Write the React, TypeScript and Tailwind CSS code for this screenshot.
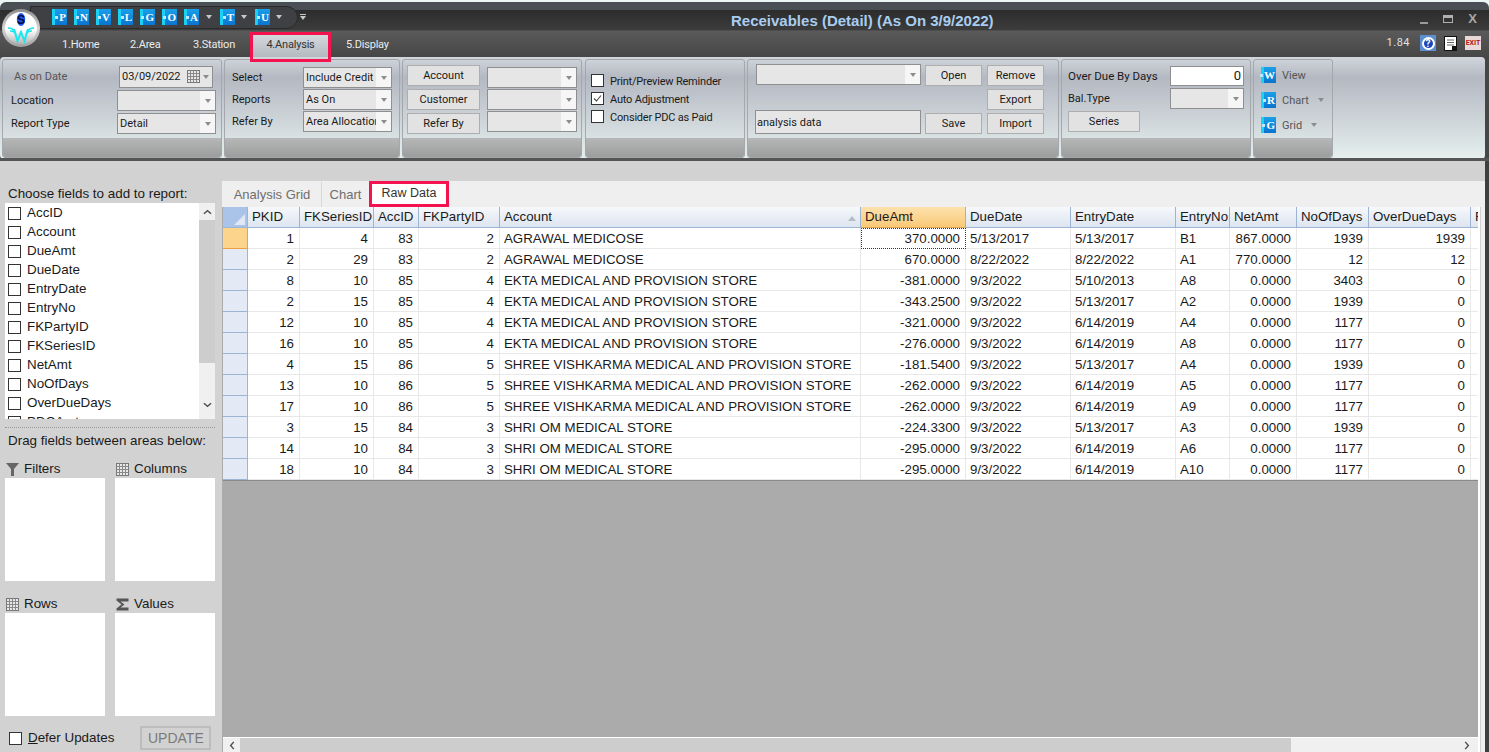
import React from "react";

const rows = [
  ["1", "4", "83", "2", "AGRAWAL MEDICOSE", "370.0000", "5/13/2017", "5/13/2017", "B1", "867.0000", "1939", "1939"],
  ["2", "29", "83", "2", "AGRAWAL MEDICOSE", "670.0000", "8/22/2022", "8/22/2022", "A1", "770.0000", "12", "12"],
  ["8", "10", "85", "4", "EKTA MEDICAL AND PROVISION STORE", "-381.0000", "9/3/2022", "5/10/2013", "A8", "0.0000", "3403", "0"],
  ["2", "15", "85", "4", "EKTA MEDICAL AND PROVISION STORE", "-343.2500", "9/3/2022", "5/13/2017", "A2", "0.0000", "1939", "0"],
  ["12", "10", "85", "4", "EKTA MEDICAL AND PROVISION STORE", "-321.0000", "9/3/2022", "6/14/2019", "A4", "0.0000", "1177", "0"],
  ["16", "10", "85", "4", "EKTA MEDICAL AND PROVISION STORE", "-276.0000", "9/3/2022", "6/14/2019", "A8", "0.0000", "1177", "0"],
  ["4", "15", "86", "5", "SHREE VISHKARMA MEDICAL AND PROVISION STORE", "-181.5400", "9/3/2022", "5/13/2017", "A4", "0.0000", "1939", "0"],
  ["13", "10", "86", "5", "SHREE VISHKARMA MEDICAL AND PROVISION STORE", "-262.0000", "9/3/2022", "6/14/2019", "A5", "0.0000", "1177", "0"],
  ["17", "10", "86", "5", "SHREE VISHKARMA MEDICAL AND PROVISION STORE", "-262.0000", "9/3/2022", "6/14/2019", "A9", "0.0000", "1177", "0"],
  ["3", "15", "84", "3", "SHRI OM MEDICAL STORE", "-224.3300", "9/3/2022", "5/13/2017", "A3", "0.0000", "1939", "0"],
  ["14", "10", "84", "3", "SHRI OM MEDICAL STORE", "-295.0000", "9/3/2022", "6/14/2019", "A6", "0.0000", "1177", "0"],
  ["18", "10", "84", "3", "SHRI OM MEDICAL STORE", "-295.0000", "9/3/2022", "6/14/2019", "A10", "0.0000", "1177", "0"],
];

const columns = ["PKID", "FKSeriesID", "AccID", "FKPartyID", "Account", "DueAmt", "DueDate", "EntryDate", "EntryNo", "NetAmt", "NoOfDays", "OverDueDays"];
const leftAligned = [4, 6, 7, 8];
const gridCols = "grid grid-cols-[25px_52px_74px_45px_81px_361px_105px_105px_105px_54px_67px_72px_102px_7px]";

const fields = ["AccID", "Account", "DueAmt", "DueDate", "EntryDate", "EntryNo", "FKPartyID", "FKSeriesID", "NetAmt", "NoOfDays", "OverDueDays", "PDCAmt"];

function Tile({ letter }: { letter: string }) {
  return (
    <span className="flex h-[16px] w-[15px] shrink-0 items-center justify-end border-l-[3px] border-[#19d0f5] bg-gradient-to-b from-[#1aa0ea] to-[#0b74cf] pr-[1px] [font-family:'Liberation_Serif',serif] text-[11px] font-bold leading-none text-white">
      <span className="mr-[1px] h-[3px] w-[3px] shrink-0 bg-[#bfe8ff]" />
      {letter}
    </span>
  );
}

function Caret({ className = "" }: { className?: string }) {
  return <span className={`h-0 w-0 border-x-[3.5px] border-t-[4px] border-x-transparent border-t-[#8c8c8c] ${className}`} />;
}

function Combo({ value = "", width }: { value?: string; width: string }) {
  return (
    <div className={`flex h-[21px] ${width} items-center border border-[#8f8f8f] bg-[#e6e6e6] pl-[2px] text-[#1a1a1a]`}>
      <span className="min-w-0 flex-1 overflow-hidden whitespace-nowrap pt-[1px]">{value}</span>
      <span className="flex h-full w-[15px] shrink-0 items-center justify-center bg-[#f6f6f6]">
        <Caret />
      </span>
    </div>
  );
}

function Btn({ label, width }: { label: string; width: string }) {
  return (
    <div className={`flex h-[21px] ${width} items-center justify-center border border-[#aeaeae] bg-[#e2e2e2] pt-[2px] text-[#1a1a1a]`}>
      {label}
    </div>
  );
}

function Group({ width, children, className = "" }: { width: string; children: React.ReactNode; className?: string }) {
  return (
    <div className={`flex h-[99px] ${width} shrink-0 flex-col overflow-hidden rounded-[3px] border border-[#a4a8ac] ${className}`}>
      <div className="min-h-0 flex-1">{children}</div>
      <div className="h-[19px] shrink-0 bg-gradient-to-b from-[#b6b8b8] to-[#9c9e9e]" />
    </div>
  );
}

function Check({ checked = false }: { checked?: boolean }) {
  return (
    <span className="flex h-[13px] w-[13px] shrink-0 items-center justify-center border border-[#333] bg-white">
      {checked && (
        <svg viewBox="0 0 11 11" className="h-[11px] w-[11px]">
          <path d="M2 5.5 4.5 8 9 2.5" fill="none" stroke="#444" strokeWidth="1.1" />
        </svg>
      )}
    </span>
  );
}

function Logo() {
  return (
    <div className="absolute left-[2px] top-[9px] flex h-[38px] w-[38px] items-center justify-center rounded-full bg-gradient-to-b from-[#8c8c8c] via-[#d8d8d8] to-[#a0a0a0]">
      <svg viewBox="0 0 32 32" className="h-[32px] w-[32px]">
        <defs>
          <linearGradient id="lg" x1="0" y1="0" x2="0" y2="1">
            <stop offset="0" stopColor="#ffffff" />
            <stop offset="0.55" stopColor="#ffffff" />
            <stop offset="1" stopColor="#b5b5b5" />
          </linearGradient>
        </defs>
        <circle cx="16" cy="16" r="16" fill="url(#lg)" />
        <ellipse cx="16" cy="7.5" rx="4.2" ry="6.5" fill="#1c55ea" />
        <text x="16" y="11.8" textAnchor="middle" fontSize="12" fontWeight="700" fill="#000a40" fontFamily="Liberation Sans, sans-serif">S</text>
        <path d="M3 16c4 0 6 2 7 4M29 16c-4 0-6 2-7 4M5 19c3 0 5 1 6 3M27 19c-3 0-5 1-6 3" fill="none" stroke="#19e6ee" strokeWidth="1.4" />
        <path d="M9 17 12.5 29 16 20 19.5 29 23 17" fill="none" stroke="#19e6ee" strokeWidth="2" />
      </svg>
    </div>
  );
}

function GridIcon() {
  return (
    <svg viewBox="0 0 13 13" className="h-[13px] w-[13px] shrink-0">
      <rect x="0.5" y="0.5" width="12" height="12" fill="#e8e8e8" stroke="#777" />
      <path d="M0.5 3.5h12M0.5 6.5h12M0.5 9.5h12M3.5 0.5v12M6.5 0.5v12M9.5 0.5v12" stroke="#888" strokeWidth="1" />
    </svg>
  );
}

function DropBox({ icon, label }: { icon: React.ReactNode; label: string }) {
  return (
    <div className="flex w-[100px] flex-col">
      <div className="flex h-[20px] items-center gap-[5px] pl-[1px] pt-[2px]">
        {icon}
        {label}
      </div>
      <div className="h-[103px] bg-white" />
    </div>
  );
}

export default function App() {
  return (
    <div className="relative flex h-[752px] w-[1489px] flex-col overflow-hidden bg-[#e9f6f3] pt-[2px] [font-family:'Liberation_Sans',sans-serif]">
      {/* title bar */}
      <div className="h-[8px] shrink-0 rounded-t-[6px] bg-[#4a4e55]" />
      <div className="relative flex h-[21px] shrink-0 items-start border-b border-[#4e4e4e] bg-gradient-to-b from-[#2c2c2c] to-[#3c3c3c]">
        <div className="absolute left-[30px] top-[-4px] h-[23px] w-[268px] rounded-r-[12px] border border-[#2a2a2a] bg-[#3e4044]" />
        <div className="relative -mt-[1px] ml-[52px] flex items-center">
          {["P", "N", "V", "L", "G", "O", "A"].map((l) => (
            <span key={l} className="mr-[7px]">
              <Tile letter={l} />
            </span>
          ))}
          <Caret className="border-t-[#c8c8c8]" />
          <span className="ml-[8px]"><Tile letter="T" /></span>
          <Caret className="ml-[6px] border-t-[#c8c8c8]" />
          <span className="ml-[8px]"><Tile letter="U" /></span>
          <Caret className="ml-[6px] border-t-[#c8c8c8]" />
          <span className="ml-[18px] flex flex-col items-center gap-[1px]">
            <span className="h-px w-[6px] bg-[#c8c8c8]" />
            <Caret className="border-t-[#c8c8c8]" />
          </span>
        </div>
        <div className="absolute left-[731px] top-[2px] whitespace-nowrap text-[15px] font-bold leading-[18px] text-[#a9cdf0]">
          Receivables (Detail) (As On 3/9/2022)
        </div>
        <div className="absolute right-[12px] top-[3px] flex items-center gap-[15px]">
          <span className="mt-[8px] h-[2px] w-[8px] bg-[#9a9a9a]" />
          <span className="h-[8px] w-[10px] border border-t-[3px] border-[#b0b0b0]" />
          <span className="text-[13px] font-bold leading-[12px] text-[#a8a8a8]">X</span>
        </div>
      </div>

      {/* tab row */}
      <div className="relative flex h-[26px] shrink-0 items-center bg-gradient-to-b from-[#5a5a5a] to-[#464646] [font-family:Roboto,sans-serif] text-[11px] tracking-[-0.2px] text-[#ececec]">
        <span className="ml-[62px] w-[68px] pt-[3px]">1.Home</span>
        <span className="w-[63px] pt-[3px]">2.Area</span>
        <span className="w-[60px] pt-[3px]">3.Station</span>
        <span className="flex h-[24px] w-[75px] items-center justify-center self-end bg-gradient-to-b from-[#d8dde2] to-[#b4b8c0] pt-[1px] text-[#333]">4.Analysis</span>
        <span className="ml-[18px] pt-[3px]">5.Display</span>
        <div className="absolute right-[8px] top-[4px] flex items-center tracking-normal">
          <span className="mr-[10px] text-[11px] tracking-[0.5px] text-[#e0e0e0]">1.84</span>
          <span className="flex h-[16px] w-[16px] items-center justify-center bg-[#5b8fd0]">
            <span className="flex h-[13px] w-[13px] items-center justify-center rounded-full border-2 border-white bg-[#1846b8] text-[10px] font-bold text-white">?</span>
          </span>
          <svg viewBox="0 0 14 15" className="ml-[8px] h-[15px] w-[14px]">
            <rect x="0.5" y="0.5" width="12" height="14" fill="#fff" stroke="#111" />
            <path d="M3 4h7M3 6.5h7M3 9h7" stroke="#666" />
            <rect x="8" y="10" width="5" height="5" fill="#111" />
          </svg>
          <span className="ml-[7px] flex h-[14px] w-[16px] items-center justify-center bg-[#e8d8d8] text-[7px] font-bold text-[#b01818]">EXIT</span>
        </div>
      </div>

      {/* ribbon */}
      <div className="relative h-[102px] shrink-0 bg-[#464646] pr-[4px]">
        <div className="flex h-[102px] gap-[2px] rounded-[4px] bg-gradient-to-b from-[#d2d6dc] via-[#b4b8c2] via-[20%] to-[#e6f0ee] pl-[2px] pt-[2px] [font-family:Roboto,sans-serif] text-[11px] text-[#1a1a1a]">
          <Group width="w-[220px]">
            <div className="flex flex-col gap-[2px] pl-[8px] pt-[5px]">
              <div className="flex h-[23px] items-center">
                <span className="ml-[3px] w-[105px] pt-[2px] text-[#555]">As on Date</span>
                <div className="flex h-[22px] w-[94px] items-center border border-[#8f8f8f] bg-[#e6e6e6] pl-[2px]">
                  <span className="flex-1 pt-[1px]">03/09/2022</span>
                  <GridIcon />
                  <Caret className="mx-[3px]" />
                </div>
              </div>
              <div className="flex h-[21px] items-center">
                <span className="w-[106px] pt-[2px]">Location</span>
                <Combo width="w-[99px]" />
              </div>
              <div className="flex h-[21px] items-center">
                <span className="w-[106px] pt-[2px]">Report Type</span>
                <Combo value="Detail" width="w-[99px]" />
              </div>
            </div>
          </Group>
          <Group width="w-[176px]">
            <div className="flex flex-col gap-px pl-[7px] pt-[7px]">
              {[["Select", "Include Credit I"], ["Reports", "As On"], ["Refer By", "Area Allocation"]].map(([l, v]) => (
                <div key={l} className="flex h-[21px] items-center">
                  <span className="w-[71px] pt-[2px]">{l}</span>
                  <Combo value={v} width="w-[89px]" />
                </div>
              ))}
            </div>
          </Group>
          <Group width="w-[180px]">
            <div className="flex pl-[4px]">
              <div className="flex flex-col gap-[3px] pt-[5px]">
                <Btn label="Account" width="w-[73px]" />
                <Btn label="Customer" width="w-[73px]" />
                <Btn label="Refer By" width="w-[73px]" />
              </div>
              <div className="ml-[7px] flex flex-col gap-px pt-[7px]">
                <Combo width="w-[90px]" />
                <Combo width="w-[90px]" />
                <Combo width="w-[90px]" />
              </div>
            </div>
          </Group>
          <Group width="w-[160px]" className="ml-[1px]">
            <div className="flex flex-col gap-[5px] pl-[5px] pt-[14px] tracking-[-0.2px]">
              {[["Print/Preview Reminder", false], ["Auto Adjustment", true], ["Consider PDC as Paid", false]].map(([l, c]) => (
                <div key={l as string} className="flex h-[13px] items-center gap-[6px]">
                  <Check checked={c as boolean} />
                  <span className="pt-[3px]">{l}</span>
                </div>
              ))}
            </div>
          </Group>
          <Group width="w-[312px]">
            <div className="flex pl-[8px] pt-[5px]">
              <div className="-mt-[1px] flex h-[70px] w-[165px] flex-col justify-between">
                <Combo width="w-[165px]" />
                <div className="-ml-[1px] flex h-[24px] items-center border border-[#8f8f8f] bg-[#e6e6e6] pl-[1px] pt-[2px]">analysis data</div>
              </div>
              <div className="ml-[4px] flex h-[69px] flex-col justify-between">
                <Btn label="Open" width="w-[57px]" />
                <Btn label="Save" width="w-[57px]" />
              </div>
              <div className="ml-[5px] flex h-[69px] flex-col justify-between">
                <Btn label="Remove" width="w-[57px]" />
                <Btn label="Export" width="w-[57px]" />
                <Btn label="Import" width="w-[57px]" />
              </div>
            </div>
          </Group>
          <Group width="w-[190px]">
            <div className="flex flex-col pl-[6px] pt-[6px]">
              <div className="flex h-[20px] items-center">
                <span className="w-[102px] pt-[2px] text-[11.5px]">Over Due By Days</span>
                <div className="flex h-[20px] w-[74px] items-center justify-end border border-[#8f8f8f] bg-white pr-[2px] text-[13px]">0</div>
              </div>
              <div className="mt-[2px] flex h-[21px] items-center">
                <span className="w-[102px] pt-[2px]">Bal.Type</span>
                <Combo width="w-[74px]" />
              </div>
              <div className="mt-[2px]"><Btn label="Series" width="w-[72px]" /></div>
            </div>
          </Group>
          <Group width="w-[80px]">
            <div className="flex flex-col gap-[9px] pl-[7px] pt-[7px] text-[#555]">
              {[["W", "View", false], ["R", "Chart", true], ["G", "Grid", true]].map(([t, l, c]) => (
                <div key={l as string} className="flex h-[16px] items-center">
                  <Tile letter={t as string} />
                  <span className="ml-[6px] pt-[2px]">{l}</span>
                  {c && <Caret className="ml-[9px]" />}
                </div>
              ))}
            </div>
          </Group>
        </div>
        <div className="absolute bottom-[-2px] left-0 right-0 h-[3px] bg-[#555]" />
      </div>

      {/* body */}
      <div className="flex min-h-0 flex-1 border-r-[4px] border-[#3f3f3f] bg-[#d2d2d2] pt-[3px]">
        {/* field list */}
        <div className="flex w-[222px] shrink-0 flex-col pl-[5px] pt-[22px] text-[13.4px] text-[#1a1a1a]">
          <div className="h-[19px] pl-[3px] leading-[19px]">Choose fields to add to report:</div>
          <div className="flex h-[216px] w-[210px] overflow-hidden bg-white">
            <div className="flex-1 pl-[3px] pt-[1px]">
              {fields.map((f) => (
                <div key={f} className="flex h-[19px] items-center gap-[6px]">
                  <Check />
                  {f}
                </div>
              ))}
            </div>
            <div className="flex w-[16px] flex-col items-center bg-[#f0f0f0]">
              <svg viewBox="0 0 10 6" className="mt-[6px] h-[6px] w-[9px]"><path d="M1 5 5 1.5 9 5" fill="none" stroke="#505050" strokeWidth="1.6" /></svg>
              <div className="mt-[5px] h-[143px] w-full bg-[#cdcdcd]" />
              <svg viewBox="0 0 10 6" className="mt-[39px] h-[6px] w-[9px]"><path d="M1 1 5 4.5 9 1" fill="none" stroke="#505050" strokeWidth="1.6" /></svg>
            </div>
          </div>
          <div className="mt-[8px] w-[210px] border-t border-dotted border-[#9a9a9a]" />
          <div className="mt-[3px] h-[19px] pl-[3px] leading-[19px]">Drag fields between areas below:</div>
          <div className="mt-[8px] flex gap-[10px]">
            <DropBox
              label="Filters"
              icon={
                <svg viewBox="0 0 13 13" className="h-[13px] w-[13px] shrink-0"><path d="M0 0h13L8 6v7H5V6z" fill="#666" /></svg>
              }
            />
            <DropBox label="Columns" icon={<GridIcon />} />
          </div>
          <div className="mt-[12px] flex gap-[10px]">
            <DropBox label="Rows" icon={<GridIcon />} />
            <DropBox
              label="Values"
              icon={
                <svg viewBox="0 0 13 13" className="h-[13px] w-[13px] shrink-0"><path d="M0.5 0.5h12v3h-8l4 3-4 3h8v3h-12v-2l5-4-5-4z" fill="#555" /></svg>
              }
            />
          </div>
          <div className="mt-[10px] flex items-center pl-[4px]">
            <Check />
            <span className="ml-[6px]"><span className="underline">D</span>efer Updates</span>
            <div className="ml-[26px] flex h-[24px] w-[71px] items-center justify-center border-2 border-[#bdbdbd] text-[14px] text-[#7a7a7a]">UPDATE</div>
          </div>
        </div>

        {/* raw data */}
        <div className="flex min-w-0 flex-1 flex-col pt-[19px]">
          <div className="flex h-[26px] shrink-0 items-end bg-[#efefef] pl-[1px] text-[13px]">
            <span className="flex h-[25px] w-[99px] items-center justify-center border-r border-[#d8d8d8] text-[#6e6e6e]">Analysis Grid</span>
            <span className="flex h-[25px] w-[47px] items-center justify-center text-[#6e6e6e]">Chart</span>
            <span className="flex h-[26px] w-[80px] items-center justify-center border-[3px] border-[#f5134f] bg-white pb-[2px] text-[12.5px] text-[#333]">Raw Data</span>
          </div>
          <div className="flex min-h-0 flex-1 bg-[#efefef]">
            <div className="flex w-[1256px] shrink-0 flex-col bg-[#ababab] pl-[1px] text-[13.3px] text-[#1a1a1a]">
              <div className={`${gridCols} h-[21px] shrink-0 overflow-hidden bg-white`}>
                <div className="flex items-end justify-end border-b border-r border-[#9db5d2] bg-[#a9c4e8] p-[2px]">
                  <span className="h-0 w-0 border-b-[11px] border-l-[11px] border-b-[#dfe8f4] border-l-transparent" />
                </div>
                {columns.map((c) => (
                  <div
                    key={c}
                    className={
                      c === "DueAmt"
                        ? "flex items-center border-b border-r border-[#e2a850] bg-gradient-to-b from-[#fde2ac] to-[#f9c877] pl-[4px]"
                        : "relative flex items-center whitespace-nowrap border-b border-r border-[#9db5d2] bg-gradient-to-b from-[#f6f8fb] to-[#dde5f0] pl-[4px]"
                    }
                  >
                    {c}
                    {c === "Account" && (
                      <span className="absolute right-[4px] top-[9px] h-0 w-0 border-x-[4px] border-b-[5px] border-x-transparent border-b-[#b4bcc8]" />
                    )}
                  </div>
                ))}
                <div className="flex items-center overflow-hidden border-b border-[#9db5d2] bg-gradient-to-b from-[#f6f8fb] to-[#dde5f0] pl-[4px]">F</div>
              </div>
              {rows.map((row, r) => (
                <div key={r} className={`${gridCols} h-[21px] shrink-0 bg-white`}>
                  <div className={r === 0 ? "border-b border-r border-[#f0a040] bg-[#fdd48c]" : "border-b border-r border-[#9db5d2] bg-[#e3eaf6]"} />
                  {row.map((v, c) => (
                    <div
                      key={c}
                      className={`flex items-center overflow-hidden whitespace-nowrap pt-[1px] ${leftAligned.includes(c) ? "justify-start pl-[4px]" : "justify-end pr-[5px]"} ${
                        r === 0 && c === 5 ? "border border-dotted border-[#333]" : "border-b border-r border-[#e8e8e8]"
                      }`}
                    >
                      {v}
                    </div>
                  ))}
                  <div className="border-b border-[#e8e8e8]" />
                </div>
              ))}
              <div className="min-h-0 flex-1 border-t border-[#8a8a8a] bg-[#ababab]" />
              <div className="flex h-[15px] shrink-0 items-center border-t border-white bg-[#f0f0f0]">
                <svg viewBox="0 0 6 10" className="ml-[6px] h-[9px] w-[6px]"><path d="M5 1 1.5 5 5 9" fill="none" stroke="#505050" strokeWidth="1.6" /></svg>
                <div className="ml-[5px] h-full w-[1051px] bg-[#cdcdcd]" />
                <svg viewBox="0 0 6 10" className="ml-[173px] h-[9px] w-[6px]"><path d="M1 1 4.5 5 1 9" fill="none" stroke="#505050" strokeWidth="1.6" /></svg>
              </div>
            </div>
            <div className="w-[2px] shrink-0 bg-white" />
            <div className="w-px shrink-0 bg-[#d0d0d0]" />
            <div className="flex-1 bg-[#efefef]" />
          </div>
        </div>
      </div>

      {/* highlight drawn over the Analysis tab */}
      <div className="pointer-events-none absolute left-[250px] top-[32px] h-[30px] w-[81px] border-[3px] border-[#f5134f]" />
      <Logo />
    </div>
  );
}
